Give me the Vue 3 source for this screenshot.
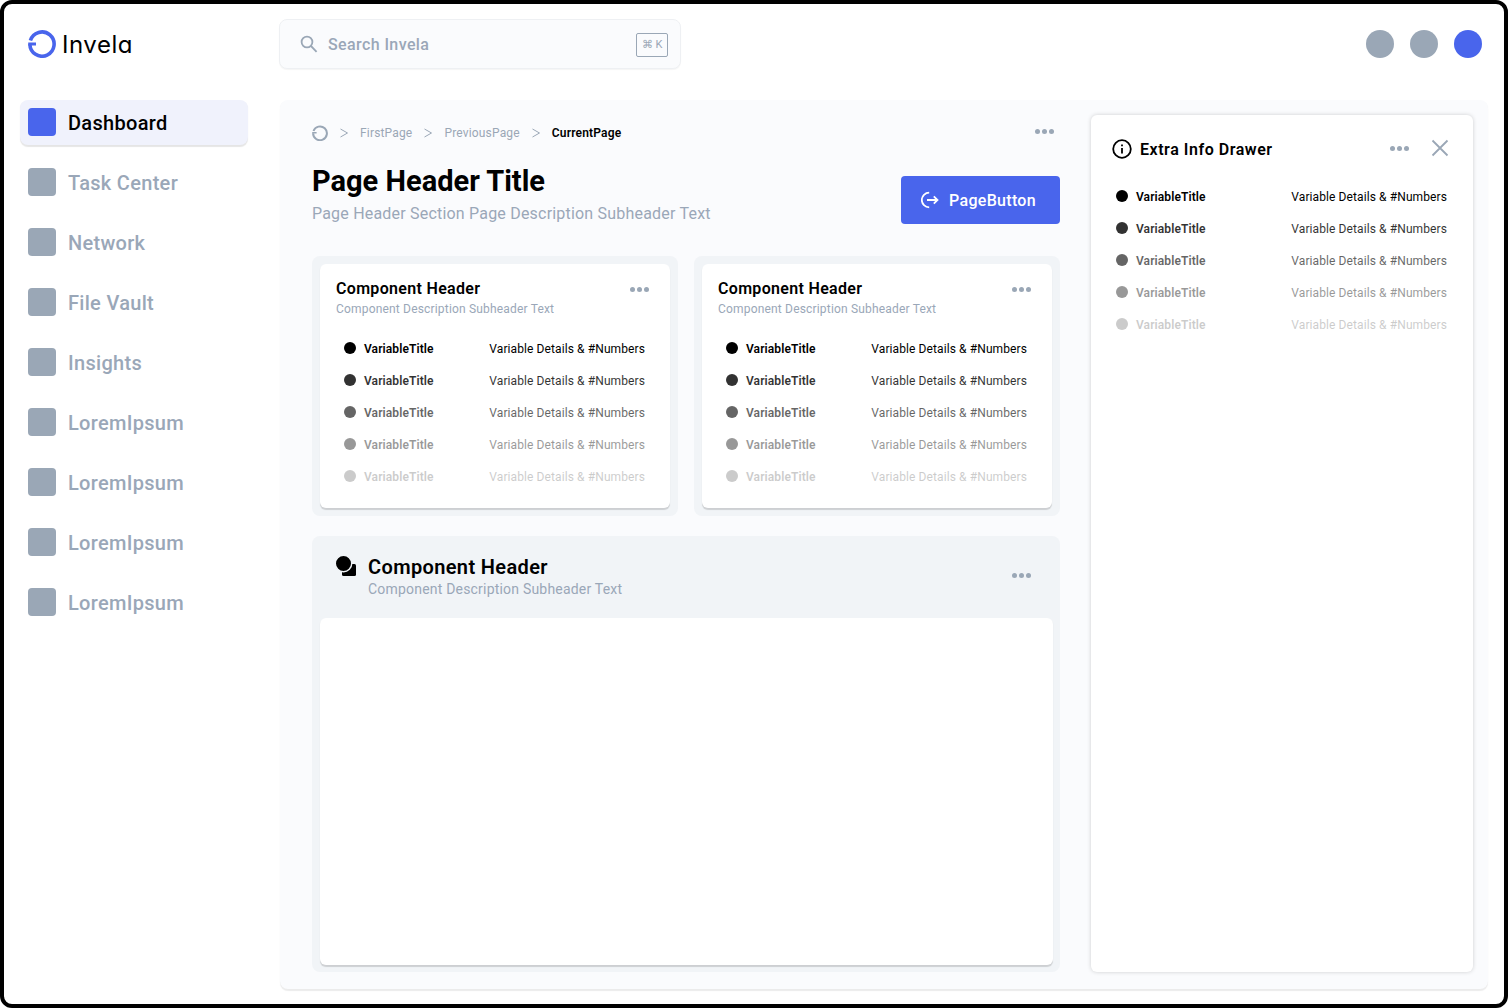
<template>
  <div class="frame">
    <header class="topbar">
      <div class="logo">
        <svg width="28" height="28" viewBox="0 0 28 28" fill="none">
          <path d="M2.400 10.600A12.100 12.100 0 1 1 1.900 14.200" stroke="#4965ec" stroke-width="3.600" />
          <path d="M0.200 12.600H8V15.600H0.200z" fill="#4965ec" />
        </svg>
        <span class="logo-text">Invela</span>
      </div>
      <div class="search">
        <svg width="18" height="18" viewBox="0 0 18 18" fill="none" stroke="#9aa7b6" stroke-width="1.800">
          <circle cx="7" cy="7" r="5.400" />
          <path d="M11 11l5.600 5.800" />
        </svg>
        <span class="search-text">Search Invela</span>
        <span class="kbd">⌘ K</span>
      </div>
      <div class="top-actions">
        <span class="circle"></span>
        <span class="circle"></span>
        <span class="circle blue"></span>
      </div>
    </header>

    <div class="body">
      <nav class="sidebar">
        <a v-for="(item, i) in navItems" :key="i" :class="['nav-item', { active: i === 0 }]">
          <span class="nav-icon"></span>
          <span class="nav-label">{{ item }}</span>
        </a>
      </nav>

      <main class="panel">
        <div class="content">
          <div class="crumbs">
            <svg class="crumb-home" width="16" height="16" viewBox="0 0 16 16" fill="none" stroke="#9aa7b6" stroke-width="2">
              <path d="M1.500 6A6.900 6.900 0 1 1 1.100 8.200" />
              <path d="M0.200 7.800H4.600" stroke-width="1.600" />
            </svg>
            <svg class="chev" width="10" height="10" viewBox="0 0 10 10" fill="none" stroke="#9aa7b6"><path d="M1.500 1l7 4-7 4" /></svg>
            <span>FirstPage</span>
            <svg class="chev" width="10" height="10" viewBox="0 0 10 10" fill="none" stroke="#9aa7b6"><path d="M1.500 1l7 4-7 4" /></svg>
            <span>PreviousPage</span>
            <svg class="chev" width="10" height="10" viewBox="0 0 10 10" fill="none" stroke="#9aa7b6"><path d="M1.500 1l7 4-7 4" /></svg>
            <span class="crumb-current">CurrentPage</span>
            <span class="dots crumb-dots"><i></i><i></i><i></i></span>
          </div>

          <div class="page-head">
            <div>
              <h1>Page Header Title</h1>
              <p>Page Header Section Page Description Subheader Text</p>
            </div>
            <button class="page-btn">
              <svg width="18" height="18" viewBox="0 0 18 18" fill="none" stroke="#fff" stroke-width="1.800">
                <path d="M8.200 1.600A7.400 7.400 0 0 0 8.200 16.400" />
                <path d="M6 9h10.500M12.800 5.300L16.500 9l-3.700 3.700" />
              </svg>
              PageButton
            </button>
          </div>

          <div class="cards">
            <section v-for="n in 2" :key="n" class="well">
              <div class="card">
                <div class="card-head">
                  <div>
                    <h3>Component Header</h3>
                    <p>Component Description Subheader Text</p>
                  </div>
                  <span class="dots"><i></i><i></i><i></i></span>
                </div>
                <ul class="rows">
                  <li v-for="o in fades" :key="o" :style="{ opacity: o }">
                    <span class="dot"></span>
                    <b>VariableTitle</b>
                    <span class="detail">Variable Details &amp; #Numbers</span>
                  </li>
                </ul>
              </div>
            </section>
          </div>

          <section class="well big">
            <div class="big-head">
              <svg width="20" height="20" viewBox="0 0 20 20" fill="#000">
                <rect x="6" y="8" width="14" height="12" rx="1.500" />
                <circle cx="7.500" cy="7.500" r="8.200" stroke="#f1f4f7" stroke-width="1.400" />
              </svg>
              <div>
                <h2>Component Header</h2>
                <p>Component Description Subheader Text</p>
              </div>
              <span class="dots"><i></i><i></i><i></i></span>
            </div>
            <div class="big-body"></div>
          </section>
        </div>

        <aside class="drawer">
          <div class="drawer-head">
            <svg width="20" height="20" viewBox="0 0 20 20" fill="none" stroke="#000" stroke-width="1.800">
              <circle cx="10" cy="10" r="8.800" />
              <path d="M10 9v5.500" />
              <path d="M10 5.400v1.800" />
            </svg>
            <span class="drawer-title">Extra Info Drawer</span>
            <span class="dots"><i></i><i></i><i></i></span>
            <svg class="close" width="18" height="18" viewBox="0 0 18 18" fill="none" stroke="#9aa7b6" stroke-width="1.800">
              <path d="M1.500 1.500l15 15M16.500 1.500l-15 15" />
            </svg>
          </div>
          <ul class="rows">
            <li v-for="o in fades" :key="o" :style="{ opacity: o }">
              <span class="dot"></span>
              <b>VariableTitle</b>
              <span class="detail">Variable Details &amp; #Numbers</span>
            </li>
          </ul>
        </aside>
      </main>
    </div>
  </div>
</template>

<script setup>
const navItems = [
  'Dashboard',
  'Task Center',
  'Network',
  'File Vault',
  'Insights',
  'LoremIpsum',
  'LoremIpsum',
  'LoremIpsum',
  'LoremIpsum'
]

const fades = [1, 0.8, 0.6, 0.4, 0.2]
</script>

<style>
html, body {
  margin: 0;
  background: #fff;
}
</style>

<style scoped>
.frame {
  box-sizing: border-box;
  width: 1508px;
  height: 1008px;
  border: 4px solid #000;
  border-radius: 12px;
  background: #fff;
  overflow: hidden;
  font-family: Roboto, "Liberation Sans", sans-serif;
  color: #000;
}

h1, h2, h3, p, ul {
  margin: 0;
  padding: 0;
}

.topbar {
  display: flex;
  align-items: center;
  height: 96px;
  padding-left: 24px;
  padding-right: 22px;
  padding-bottom: 16px;
  box-sizing: border-box;
}

.logo {
  display: flex;
  align-items: center;
  gap: 6px;
  width: 251px;
}

.logo-text {
  font-family: Inter, sans-serif;
  font-feature-settings: "cv11";
  font-size: 24px;
  font-weight: 400;
  letter-spacing: 0.55px;
}

.search {
  display: flex;
  align-items: center;
  box-sizing: border-box;
  width: 402px;
  height: 50px;
  padding: 0 12px 0 20px;
  background: #fafbfd;
  border: 1px solid #eef0f3;
  border-radius: 8px;
  box-shadow: 0 1px 1px rgba(0, 0, 0, 0.04);
}

.search-text {
  flex: 1;
  margin-left: 10px;
  font-size: 16px;
  font-weight: 500;
  letter-spacing: 0.4px;
  color: #9aa7b8;
}

.kbd {
  width: 32px;
  height: 24px;
  margin-top: 1px;
  box-sizing: border-box;
  border: 1px solid #9aa7b6;
  border-radius: 2px;
  font-size: 11px;
  line-height: 22px;
  text-align: center;
  color: #9aa7b6;
}

.top-actions {
  display: flex;
  gap: 16px;
  margin-left: auto;
}

.circle {
  width: 28px;
  height: 28px;
  border-radius: 50%;
  background: #9aa7b6;
}

.circle.blue {
  background: #4965ec;
}

.body {
  display: flex;
}

.sidebar {
  display: flex;
  flex-direction: column;
  gap: 15px;
  width: 228px;
  margin-left: 16px;
  margin-right: 32px;
}

.nav-item {
  display: flex;
  align-items: center;
  gap: 12px;
  box-sizing: border-box;
  height: 45px;
  padding-left: 8px;
  padding-bottom: 1px;
  border-radius: 8px;
  font-size: 20px;
  font-weight: 500;
  letter-spacing: 0.3px;
  color: #9aa7b8;
}

.nav-label {
  margin-top: 2px;
}

.nav-item.active {
  background: #f0f2fc;
  box-shadow: 0 1.500px 1px rgba(0, 0, 0, 0.1);
  color: #000;
}

.nav-icon {
  width: 28px;
  height: 28px;
  border-radius: 4px;
  background: #9aa7b6;
}

.active .nav-icon {
  background: #4965ec;
}

.panel {
  display: flex;
  width: 1208px;
  height: 889px;
  box-sizing: border-box;
  background: #fafbfd;
  border-radius: 8px;
  box-shadow: 0 1.500px 1px rgba(0, 0, 0, 0.08);
  padding: 15px 15px 17px 32px;
  gap: 31px;
}

.content {
  display: flex;
  flex-direction: column;
  width: 748px;
}

.crumbs {
  display: flex;
  align-items: center;
  height: 36px;
  font-size: 12px;
  letter-spacing: 0.17px;
  color: #9aa7b6;
}

.crumb-home {
  margin-right: 11px;
}

.chev {
  margin-right: 11px;
}

.crumbs span + .chev {
  margin-left: 11px;
}

.crumb-current {
  color: #000;
  font-weight: 600;
}

.crumb-dots {
  margin-left: auto;
  margin-right: 6px;
  margin-top: -3px;
}

.page-head {
  display: flex;
  align-items: flex-end;
  justify-content: space-between;
  margin-top: 11px;
  height: 64px;
}

.page-head h1 {
  margin-bottom: 1px;
  font-size: 29px;
  line-height: 40px;
  font-weight: 700;
}

.page-head p {
  font-size: 16px;
  line-height: 24px;
  letter-spacing: 0.2px;
  color: #9aa7b8;
}

.page-btn {
  display: flex;
  align-items: center;
  justify-content: center;
  gap: 10px;
  box-sizing: border-box;
  width: 159px;
  height: 48px;
  margin-bottom: 2px;
  padding: 0 4px 0 0;
  border: 0;
  border-radius: 4px;
  background: #4965ec;
  color: #fff;
  font-family: inherit;
  font-size: 16px;
  font-weight: 500;
  letter-spacing: 0.3px;
}

.cards {
  display: grid;
  grid-template-columns: 366px 366px;
  gap: 16px;
  margin-top: 30px;
}

.well {
  background: #f1f4f7;
  border-radius: 8px;
  padding: 8px;
}

.card {
  box-sizing: border-box;
  height: 244px;
  padding: 15px 16px 0;
  background: #fff;
  border-radius: 6px;
  box-shadow: 0 1.500px 1px rgba(0, 0, 0, 0.15);
}

.card-head {
  display: flex;
  justify-content: space-between;
}

.card-head h3 {
  font-size: 16px;
  line-height: 20px;
  font-weight: 600;
  letter-spacing: 0.32px;
}

.card-head p {
  margin-top: 1px;
  font-size: 12px;
  line-height: 18px;
  letter-spacing: 0.18px;
  color: #9aa7b8;
}

.card-head .dots {
  margin-top: 8px;
  margin-right: 5px;
}

.rows {
  list-style: none;
}

.card .rows {
  margin-top: 15px;
  padding-left: 8px;
  padding-right: 9px;
}

.rows li {
  display: flex;
  align-items: center;
  height: 32px;
  font-size: 12px;
  letter-spacing: 0.1px;
}

.rows b {
  font-weight: 600;
}

.dot {
  width: 12px;
  height: 12px;
  margin-right: 8px;
  margin-top: -2px;
  border-radius: 50%;
  background: #000;
}

.detail {
  margin-left: auto;
}

.big {
  flex: 1;
  display: flex;
  flex-direction: column;
  margin-top: 20px;
  padding: 0 7px 7px 8px;
}

.big-head {
  display: flex;
  align-items: flex-start;
  gap: 12px;
  height: 82px;
  padding: 20px 22px 0 16px;
  box-sizing: border-box;
}

.big-head h2 {
  font-size: 20px;
  line-height: 22px;
  font-weight: 600;
  letter-spacing: 0.37px;
}

.big-head p {
  margin-top: 2px;
  font-size: 14px;
  line-height: 18px;
  letter-spacing: 0.2px;
  color: #9aa7b8;
}

.big-head .dots {
  margin-left: auto;
  margin-top: 17px;
}

.big-body {
  flex: 1;
  background: #fff;
  border-radius: 6px;
  box-shadow: 0 1.500px 1px rgba(0, 0, 0, 0.15);
}

.drawer {
  flex: 1;
  box-sizing: border-box;
  padding: 22px 24px 0 21px;
  background: #fff;
  border-radius: 6px;
  box-shadow: 0 0 4px rgba(0, 0, 0, 0.18);
}

.drawer-head {
  display: flex;
  align-items: center;
  gap: 8px;
  height: 24px;
}

.drawer-title {
  flex: 1;
  font-size: 16px;
  font-weight: 600;
  letter-spacing: 0.54px;
}

.drawer-head .dots {
  margin-top: -2px;
}

.close {
  margin-left: 14px;
  margin-top: -2px;
}

.drawer .rows {
  margin-top: 20px;
  padding-left: 4px;
  padding-right: 2px;
}

.dots {
  display: flex;
  gap: 2px;
  height: 5px;
}

.dots i {
  width: 5px;
  height: 5px;
  border-radius: 50%;
  background: #9aa7b6;
}
</style>
